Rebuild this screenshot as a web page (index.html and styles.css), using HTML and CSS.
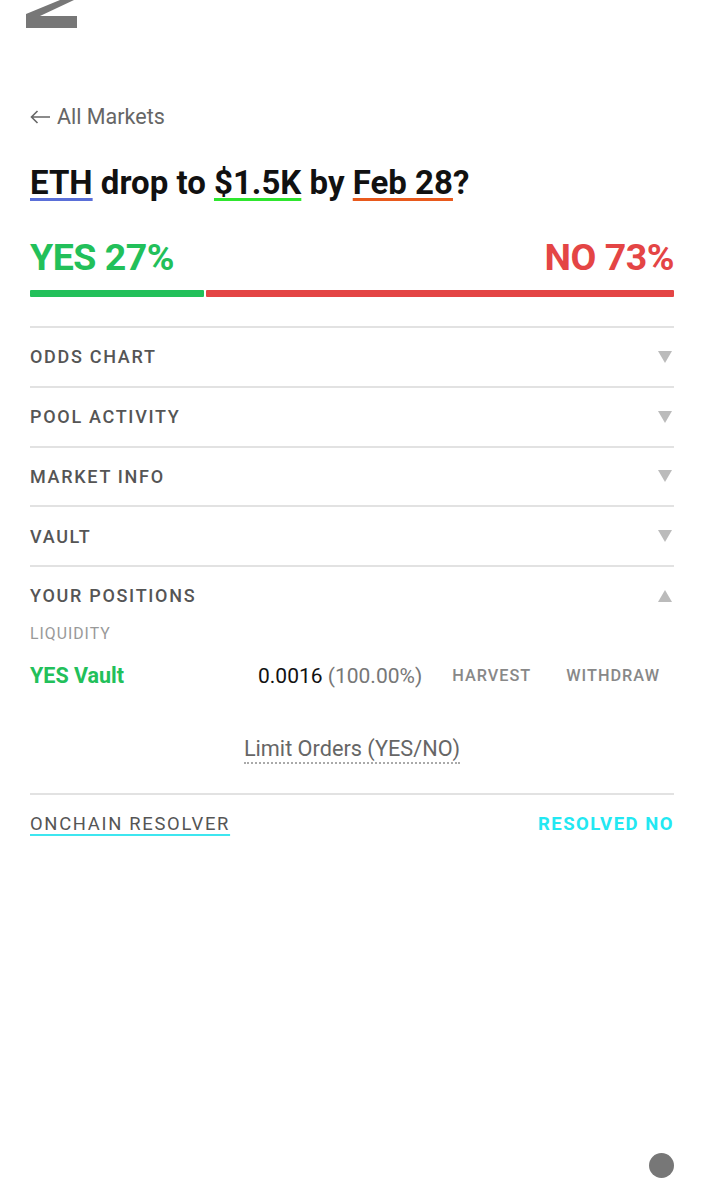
FILE: index.html
```html
<!DOCTYPE html>
<html lang="en">
<head>
  <meta charset="UTF-8" />
  <meta name="viewport" content="width=device-width, initial-scale=1.0"/>
  <title>ETH drop to $1.5K by Feb 28?</title>
  <link rel="stylesheet" href="styles.css">
</head>
<body>

  <div class="page">
    <div class="logo">
      <svg width="52" height="28" viewBox="26 0 52 28">
        <polygon points="60,0 74,0 40,16 77,16 77,28 26,28 26,14" fill="#777"/>
      </svg>
    </div>

    <a class="back-link" href="#">
      <svg class="back-arrow" width="21" height="14" viewBox="0 0 21 14"><path d="M20 7H1.5M7.5 1L1.5 7l6 6" /></svg>
      All Markets
    </a>

    <h1 class="market-title">
      <span class="tag tag-asset">ETH</span> drop to <span class="tag tag-price">$1.5K</span> by <span class="tag tag-date">Feb 28</span>?
    </h1>

    <div class="odds">
      <span class="odds-yes">YES 27%</span>
      <span class="odds-no">NO 73%</span>
    </div>
    <div class="odds-bar">
      <div class="bar-yes" style="width: 27%"></div>
      <div class="bar-no"></div>
    </div>

    <div class="section">
      <span class="section-title">Odds Chart</span>
      <svg class="caret" width="14" height="12" viewBox="0 0 14 12"><polygon points="0,0 14,0 7,12" /></svg>
    </div>
    <div class="section">
      <span class="section-title">Pool Activity</span>
      <svg class="caret" width="14" height="12" viewBox="0 0 14 12"><polygon points="0,0 14,0 7,12" /></svg>
    </div>
    <div class="section">
      <span class="section-title">Market Info</span>
      <svg class="caret" width="14" height="12" viewBox="0 0 14 12"><polygon points="0,0 14,0 7,12" /></svg>
    </div>
    <div class="section">
      <span class="section-title">Vault</span>
      <svg class="caret" width="14" height="12" viewBox="0 0 14 12"><polygon points="0,0 14,0 7,12" /></svg>
    </div>

    <div class="section-open">
      <div class="section open-head">
        <span class="section-title">Your Positions</span>
        <svg class="caret" width="14" height="12" viewBox="0 0 14 12"><polygon points="7,0 14,12 0,12" /></svg>
      </div>
      <div class="group-label">Liquidity</div>
      <div class="position">
        <span class="position-name">YES Vault</span>
        <span class="position-amount">0.0016 <span class="position-share">(100.00%)</span></span>
        <span class="position-action">Harvest</span>
        <span class="position-action">Withdraw</span>
      </div>
      <div class="limit-orders">
        <span class="limit-link">Limit Orders (YES/NO)</span>
      </div>
    </div>

    <div class="resolver">
      <a class="resolver-link" href="#">Onchain Resolver</a>
      <span class="resolver-status">Resolved No</span>
    </div>
  </div>

  <div class="fab"></div>

</body>
</html>
```

FILE: styles.css
```css
body {
  font-family: Roboto, 'Noto Sans', sans-serif;
  margin: 0;
  background: #fff;
  color: #111;
}

.page {
  padding: 0 30px;
}

.logo {
  height: 28px;
  margin-left: -4px;
}

.logo svg {
  display: block;
}

.back-link {
  display: flex;
  align-items: center;
  gap: 6px;
  margin-top: 76px;
  font-size: 21.5px;
  line-height: 26px;
  color: #666;
  text-decoration: none;
}

.back-arrow {
  fill: none;
  stroke: #666;
  stroke-width: 1.6;
}

.market-title {
  margin: 34px 0 0;
  font-size: 33px;
  line-height: 38px;
  font-weight: bold;
  color: #111;
}

.tag {
  text-decoration: underline;
  text-decoration-thickness: 3px;
  text-underline-offset: 4px;
}

.tag-asset { text-decoration-color: #5a6fd8; }
.tag-price { text-decoration-color: #2ee62e; }
.tag-date { text-decoration-color: #e8591c; }

.odds {
  display: flex;
  justify-content: space-between;
  margin-top: 33px;
  font-size: 37.5px;
  line-height: 44px;
  font-weight: bold;
  letter-spacing: -0.5px;
}

.odds-yes { color: #22c05a; }
.odds-no { color: #e44545; }

.odds-bar {
  display: flex;
  gap: 2px;
  height: 7px;
  margin-top: 11px;
}

.bar-yes {
  background: #22c05a;
  border-radius: 1px;
}

.bar-no {
  flex: 1;
  background: #e44545;
  border-radius: 1px;
}

.section {
  display: flex;
  justify-content: space-between;
  align-items: center;
  height: 57.75px;
  border-top: 2px solid #e2e2e2;
}

.odds-bar + .section {
  margin-top: 29px;
}

.section-title {
  font-size: 18px;
  font-weight: 500;
  letter-spacing: 1.7px;
  text-transform: uppercase;
  color: #555;
}

.caret {
  margin-right: 2px;
  fill: #bbb;
}

.group-label {
  margin-top: -1px;
  font-size: 15.8px;
  line-height: 20px;
  letter-spacing: 1px;
  text-transform: uppercase;
  color: #999;
}

.position {
  display: flex;
  align-items: center;
  height: 44px;
  margin-top: 10px;
}

.position-name {
  width: 228px;
  font-size: 21.5px;
  font-weight: bold;
  color: #22c05a;
}

.position-amount {
  font-size: 21px;
  color: #111;
}

.position-share {
  color: #777;
}

.position-action {
  margin-left: 35px;
  font-size: 16.3px;
  font-weight: 500;
  letter-spacing: 1px;
  text-transform: uppercase;
  color: #888;
}

.position-amount + .position-action {
  margin-left: 30px;
}

.limit-orders {
  display: flex;
  justify-content: center;
  padding: 38px 0 29px;
}

.limit-link {
  font-size: 21.7px;
  line-height: 26px;
  color: #666;
  border-bottom: 2px dotted #aaa;
}

.resolver {
  display: flex;
  justify-content: space-between;
  align-items: center;
  height: 58px;
  border-top: 2px solid #e2e2e2;
}

.resolver-link {
  font-size: 18.4px;
  letter-spacing: 1.7px;
  text-transform: uppercase;
  color: #555;
  text-decoration: underline;
  text-decoration-color: #3ee6f0;
  text-decoration-thickness: 2px;
  text-underline-offset: 4px;
}

.resolver-status {
  font-size: 18.5px;
  font-weight: bold;
  letter-spacing: 1.5px;
  text-transform: uppercase;
  color: #22e8f2;
}

.fab {
  position: fixed;
  left: 649px;
  top: 1153px;
  width: 25px;
  height: 25px;
  border-radius: 50%;
  background: #777;
}
```
